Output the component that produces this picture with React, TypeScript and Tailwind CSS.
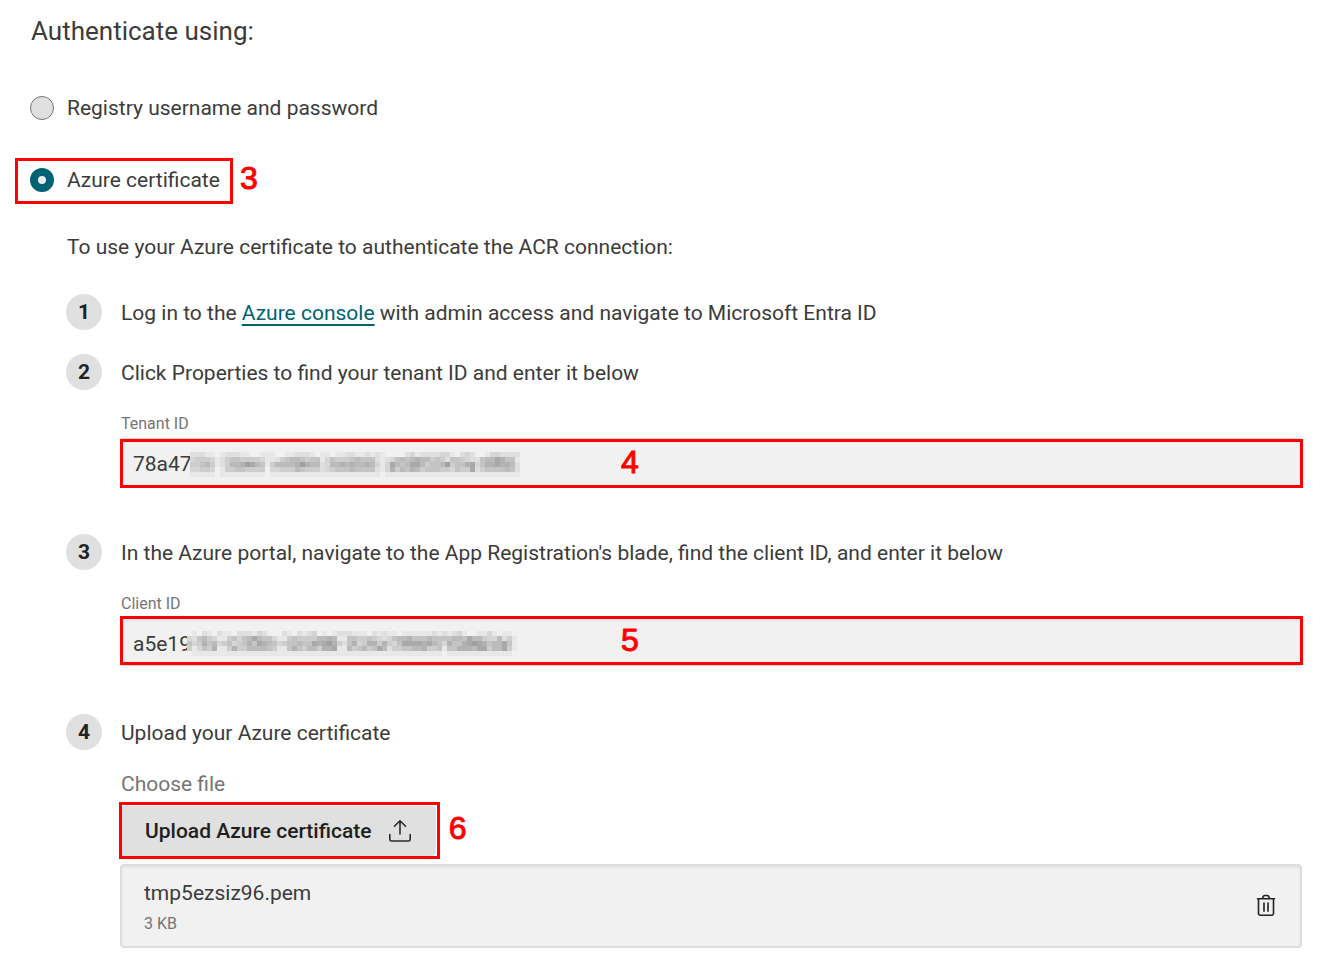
import type { ReactNode } from "react";

const TENANT_MASK = [
  "222110122211001110011222101101122112121000023122223310232001332222",
  "344431245544443112456654551354445655521235656766454255432256687551",
  "445641246679865146666797662366767667631386568864556945578357787762",
  "334430144554444033444654442345556555521374657645554435448245555652",
  "111110111111111011111111111111111111110111111111111111111111111111",
];

const CLIENT_MASK = [
  "010210211022213200021021230101222111021211011111121212310011310110",
  "325643114535686553114544446676115544543235667555655556658664336241",
  "534756345345758765345565587897425734774743588887865375578987566851",
  "413547114744666654115754664778116456458624455667445155777688466841",
  "011111111111111111111111111111111111111111111111111011111111111110",
];

function Redaction({ rows, className }: { rows: string[]; className: string }) {
  return (
    <svg
      aria-hidden="true"
      width={330}
      height={25}
      viewBox="0 0 330 25"
      shapeRendering="crispEdges"
      className={`pointer-events-none absolute ${className}`}
    >
      {rows.map((row, y) =>
        row.split("").map((level, x) => {
          const v = 241 - Number(level) * 9;
          return (
            <rect key={`${x}-${y}`} x={x * 5} y={y * 5} width="5" height="5" fill={`rgb(${v},${v},${v})`} />
          );
        }),
      )}
    </svg>
  );
}

function Callout({ box, label, children }: { box: string; label: string; children: ReactNode }) {
  return (
    <>
      <span aria-hidden="true" className={`pointer-events-none absolute border-3 border-[#ff0000] ${box}`} />
      <span
        className={`pointer-events-none absolute font-['Liberation_Sans',sans-serif] text-[32px] leading-8 text-[#ff0000] [-webkit-text-stroke:1px_#ff0000] ${label}`}
      >
        {children}
      </span>
    </>
  );
}

function Step({ n, title, children }: { n: number; title: ReactNode; children?: ReactNode }) {
  return (
    <li>
      <div className="flex items-center gap-[19px]">
        <span className="flex size-9 shrink-0 items-center justify-center rounded-full bg-[#e0e0e0] font-bold text-[#222]">
          {n}
        </span>
        <p className="pt-px">{title}</p>
      </div>
      {children && <div className="pl-[54px]">{children}</div>}
    </li>
  );
}

const radio =
  "size-6 shrink-0 appearance-none rounded-full border border-[#767676] bg-[#e0e0e0] checked:border-8 checked:border-[#006272] checked:bg-[#ececec]";
const field =
  "block h-12 w-full rounded-xs border border-[#d6d8d8] bg-[#f1f1f1] px-3 pt-1 text-[#3b3b3b] shadow-[inset_0_2px_3px_rgba(0,0,0,0.06)] outline-none";
const fieldLabel = "mt-6 mb-1 block pl-px text-base leading-5 text-[#757575]";

export default function App() {
  return (
    <main className="bg-white pt-3 pr-[33px] pb-3 pl-[30px] font-['Roboto',sans-serif] text-[21px] leading-[30px] text-[#3b3b3b]">
      <h2 className="pl-px text-[26px] leading-[38px]">Authenticate using:</h2>

      <label className="mt-[46px] flex h-6 w-fit items-center gap-[13px]">
        <input type="radio" name="auth" className={radio} />
        Registry username and password
      </label>

      <div className="relative mt-12 w-fit">
        <label className="flex h-6 items-center gap-[13px]">
          <input type="radio" name="auth" defaultChecked className={radio} />
          Azure certificate
        </label>
        <Callout box="-top-[10px] -bottom-3 -left-[15px] -right-[13px]" label="-right-[38px] -top-[6px]">
          3
        </Callout>
      </div>

      <section className="mt-10 pl-9">
        <p className="pl-px">To use your Azure certificate to authenticate the ACR connection:</p>

        <ol className="mt-8 flex flex-col gap-12">
          <li>
            <ol className="flex flex-col gap-6">
              <Step
                n={1}
                title={
                  <>
                    Log in to the{" "}
                    <a href="#azure-console" className="text-[#006272] underline decoration-2 underline-offset-4">
                      Azure console
                    </a>{" "}
                    with admin access and navigate to Microsoft Entra ID
                  </>
                }
              />
              <Step n={2} title="Click Properties to find your tenant ID and enter it below">
                <label htmlFor="tenant" className={fieldLabel}>
                  Tenant ID
                </label>
                <div className="relative">
                  <input id="tenant" defaultValue="78a47" className={field} />
                  <Redaction rows={TENANT_MASK} className="top-[14px] left-[70px]" />
                  <Callout box="top-px -bottom-[2px] left-0 -right-px" label="left-[501px] top-2">
                    4
                  </Callout>
                </div>
              </Step>
            </ol>
          </li>
          <Step
            n={3}
            title="In the Azure portal, navigate to the App Registration's blade, find the client ID, and enter it below"
          >
            <label htmlFor="client" className={fieldLabel}>
              Client ID
            </label>
            <div className="relative">
              <input id="client" defaultValue="a5e19" className={field} />
              <Redaction rows={CLIENT_MASK} className="top-[13px] left-[67px]" />
              <Callout box="-top-[2px] bottom-px left-0 -right-px" label="left-[501px] top-[6px]">
                5
              </Callout>
            </div>
          </Step>
          <Step n={4} title="Upload your Azure certificate">
            <p className="mt-5 pl-px leading-7 text-[#757575]">Choose file</p>
            <div className="relative mt-2 w-fit">
              <button
                type="button"
                className="flex h-[50px] items-center gap-[17px] rounded-sm bg-[#e0e0e0] pr-6 pl-[25px] font-medium text-[#1f1f1f]"
              >
                Upload Azure certificate
                <svg
                  aria-hidden="true"
                  viewBox="0 0 24 24"
                  className="size-6 fill-none stroke-[#2b2b2b] stroke-[1.6]"
                  strokeLinecap="round"
                  strokeLinejoin="round"
                >
                  <path d="M12 15V1.800M6.500 7.300 12 1.800l5.500 5.500M1.800 15.500V20a2 2 0 0 0 2 2h16.400a2 2 0 0 0 2-2v-4.500" />
                </svg>
              </button>
              <Callout box="-top-1 -bottom-[3px] -left-px -right-1" label="-right-[30px] top-[6px]">
                6
              </Callout>
            </div>
            <div className="mt-2 flex h-[84px] items-center justify-between rounded-sm border-2 border-[#dcdddd] bg-[#f1f1f1] px-[22px] shadow-[inset_0_2px_3px_rgba(0,0,0,0.05)]">
              <div>
                <p className="pt-px">tmp5ezsiz96.pem</p>
                <p className="mt-1 text-base leading-6 text-[#757575]">3 KB</p>
              </div>
              <button type="button" aria-label="Remove file">
                <svg
                  aria-hidden="true"
                  viewBox="0 0 24 24"
                  className="block size-6 fill-none stroke-[#222] stroke-[1.6]"
                  strokeLinecap="round"
                  strokeLinejoin="round"
                >
                  <path d="M3.500 4.800h17M4.500 4.800V19.500a1.800 1.800 0 0 0 1.800 1.800h11.400a1.800 1.800 0 0 0 1.800-1.800V4.800M8.700 4.600C8.700 2.400 9.700 1.500 11 1.500h2c1.300 0 2.300.9 2.300 3.100M10 9v8.200M14 9v8.200" />
                </svg>
              </button>
            </div>
          </Step>
        </ol>
      </section>
    </main>
  );
}
